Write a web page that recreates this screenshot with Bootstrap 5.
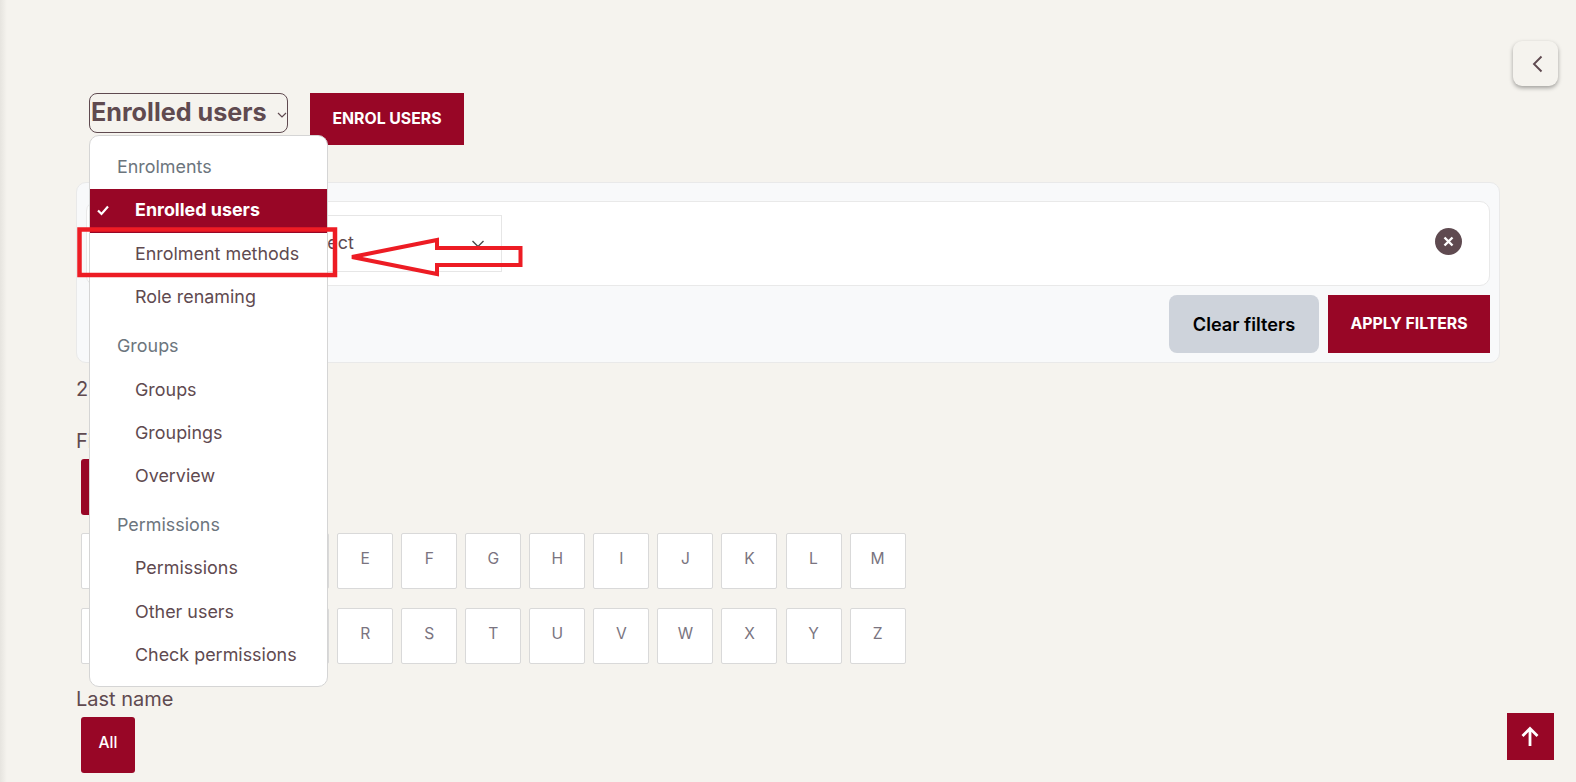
<!DOCTYPE html>
<html lang="en">
<head>
<meta charset="utf-8">
<title>Enrolled users</title>
<link href="https://cdn.jsdelivr.net/npm/bootstrap@5.3.0/dist/css/bootstrap.min.css" rel="stylesheet">
<style>
html,body{height:100%;overflow:hidden}
body{background:#f5f3ee;color:#5f4a50;font-family:Inter,"Liberation Sans",sans-serif;font-size:20px;line-height:1.5}
.edge-shade{position:absolute;left:0;top:0;bottom:0;width:7px;background:linear-gradient(90deg,#e6e4df,#f5f3ee)}
.page-main{position:relative;padding:93px 0 0 76px;box-sizing:content-box;width:1424px}
.head-row{margin-left:13px;height:52px;gap:22px;align-items:flex-start}
.menu-wrap{position:relative}
.title-btn{height:40px;width:199px;background:transparent;border:1px solid #5f4a50;border-radius:8px;color:#5f4a50;font-size:25.2px;font-weight:700;padding:0 1px 2px;line-height:36px;display:flex;align-items:center;justify-content:space-between;white-space:nowrap}
.title-btn svg{margin-right:-2px;margin-top:6px}
.menu-box{display:block;position:absolute;top:42px;left:0;width:239px;height:552px;padding:9px 0 0;margin:0;border:1px solid #d5d5d5;border-radius:10px;background:#fff;font-size:17.92px;z-index:5}
.menu-box .dropdown-header{color:#6c757d;font-size:17.92px;line-height:26px;padding:9px 27px 9px;white-space:nowrap}
.menu-box .dropdown-item{color:#5f4a50;line-height:26px;padding:8.6px 45px;position:relative;font-size:17.92px}
.menu-box .dropdown-item.active{background:#980626;color:#fff;font-weight:700;padding:8px 45px 9.5px}
.menu-box .dropdown-item svg{position:absolute;left:6px;top:14px}
.menu-box .group-gap{margin-top:5.2px}
.primary-btn{background:#980626;border:0;border-radius:0;color:#fff;font-weight:700;font-size:15.8px;text-transform:uppercase}
.primary-btn:hover{background:#980626;color:#fff}
.enrol-btn{width:154px;height:52px}
.filter-panel{margin-top:37px;height:181px;background:#f8f9fa;border:1px solid #e9e9e9;border-radius:10px;padding:18px 9px 0 9px}
.filter-row{height:85px;background:#fff;border:1px solid #e9e9e9;border-radius:10px;padding:13px 27px 0 200px;align-items:flex-start;justify-content:space-between}
.select-box{width:214px;height:57px;border:1px solid #e6e6e6;font-size:17.92px;align-items:center;justify-content:space-between;margin-left:1px;padding:0 16px 0 12px}
.clear-x{width:27px;height:27px;border-radius:50%;background:#5f4a50;border:0;padding:0;margin-top:13px;display:flex;align-items:center;justify-content:center}
.filter-actions{margin-top:9px;gap:9px;justify-content:flex-end}
.clear-btn{width:150px;height:58px;background:#ced3db;border:0;border-radius:8px;color:#000;font-weight:600;font-size:18.2px;padding-top:8px}
.clear-btn:hover{background:#ced3db;color:#000}
.apply-btn{width:162px;height:58px}
.count-line{margin:12px 0 0;line-height:28px}
.name-label{line-height:28px;margin:0;margin-top:24px}
.tile-set{padding-left:5px}
.all-btn{display:flex;align-items:center;justify-content:center;width:54px;height:56px;background:#980626;border-radius:3px;color:#fff;font-size:15.6px;font-weight:500;margin-top:4px;padding-bottom:4px}
.tile-row{display:flex;gap:8.05px;margin-top:18px}
.tile-row + .tile-row{margin-top:19px}
.tile{width:56px;height:56px;background:#fff;border:1px solid #d9d9d9;border-radius:2px;color:#7a7480;font-size:15.6px;display:flex;align-items:center;justify-content:center;padding-bottom:4px}
.last-label{margin-top:21px}
.collapse-btn{position:absolute;left:1513px;top:41px;width:45px;height:45px;background:#f5f3ee;border:0;border-radius:9px;box-shadow:0 2px 4px rgba(0,0,0,.35);display:flex;align-items:center;justify-content:center;padding:0 0 0 2px}
.top-btn{position:absolute;left:1507px;top:713px;width:47px;height:47px;background:#980626;border:0;padding:0 2px 0 0;display:flex;align-items:center;justify-content:center}
.note-mark{position:absolute;left:0;top:0;z-index:10;pointer-events:none}
</style>
</head>
<body>
<div class="edge-shade"></div>
<main class="page-main">
  <div class="d-flex head-row">
    <div class="menu-wrap">
      <button class="title-btn" type="button">Enrolled users
        <svg width="12" height="10" viewBox="0 0 12 10"><path d="M2 3 6 7l4-4" fill="none" stroke="#5f4a50" stroke-width="1.2"/></svg>
      </button>
      <ul class="dropdown-menu menu-box list-unstyled">
        <li class="dropdown-header">Enrolments</li>
        <li><a class="dropdown-item active" href="#"><svg width="14" height="14" viewBox="0 0 14 14"><path d="M2 7.5 5.5 11 12 3.5" fill="none" stroke="#fff" stroke-width="2.2"/></svg>Enrolled users</a></li>
        <li><a class="dropdown-item" href="#">Enrolment methods</a></li>
        <li><a class="dropdown-item" href="#">Role renaming</a></li>
        <li class="dropdown-header group-gap">Groups</li>
        <li><a class="dropdown-item" href="#">Groups</a></li>
        <li><a class="dropdown-item" href="#">Groupings</a></li>
        <li><a class="dropdown-item" href="#">Overview</a></li>
        <li class="dropdown-header group-gap">Permissions</li>
        <li><a class="dropdown-item" href="#">Permissions</a></li>
        <li><a class="dropdown-item" href="#">Other users</a></li>
        <li><a class="dropdown-item" href="#">Check permissions</a></li>
      </ul>
    </div>
    <button class="btn primary-btn enrol-btn" type="button">Enrol users</button>
  </div>

  <section class="filter-panel">
    <div class="d-flex filter-row">
      <div class="d-flex select-box"><span>Select</span>
        <svg width="14" height="14" viewBox="0 0 14 14"><path d="M1.5 4 7 9.5 12.5 4" fill="none" stroke="#4a4a4a" stroke-width="1.4"/></svg>
      </div>
      <button class="clear-x" type="button" aria-label="Remove">
        <svg width="11" height="11" viewBox="0 0 11 11"><path d="M1.5 1.5l8 8M9.5 1.5l-8 8" stroke="#fff" stroke-width="2.4"/></svg>
      </button>
    </div>
    <div class="d-flex filter-actions">
      <button class="btn clear-btn" type="button">Clear filters</button>
      <button class="btn primary-btn apply-btn" type="button">Apply filters</button>
    </div>
  </section>

  <p class="count-line">2 participants found</p>
  <p class="name-label">First name</p>
  <div class="tile-set">
    <div class="all-btn">All</div>
    <div class="tile-row"><div class="tile">A</div><div class="tile">B</div><div class="tile">C</div><div class="tile">D</div><div class="tile">E</div><div class="tile">F</div><div class="tile">G</div><div class="tile">H</div><div class="tile">I</div><div class="tile">J</div><div class="tile">K</div><div class="tile">L</div><div class="tile">M</div></div>
    <div class="tile-row"><div class="tile">N</div><div class="tile">O</div><div class="tile">P</div><div class="tile">Q</div><div class="tile">R</div><div class="tile">S</div><div class="tile">T</div><div class="tile">U</div><div class="tile">V</div><div class="tile">W</div><div class="tile">X</div><div class="tile">Y</div><div class="tile">Z</div></div>
  </div>
  <p class="name-label last-label">Last name</p>
  <div class="tile-set"><div class="all-btn">All</div></div>
</main>

<button class="collapse-btn" type="button" aria-label="Open block drawer">
  <svg width="14" height="20" viewBox="0 0 14 20"><path d="M11.5 2.5 4 10l7.500 7.500" fill="none" stroke="#5f4a50" stroke-width="1.9"/></svg>
</button>
<button class="top-btn" type="button" aria-label="Back to top">
  <svg width="20" height="22" viewBox="0 0 20 22"><path d="M10 20V3M2.500 10 10 2.500 17.500 10" fill="none" stroke="#fff" stroke-width="2.8"/></svg>
</button>
<svg class="note-mark" width="1576" height="782" viewBox="0 0 1576 782">
  <rect x="79.500" y="229.500" width="255.500" height="45.500" fill="none" stroke="#ed1c24" stroke-width="4.500"/>
  <path d="M352 257 437 240V248H520.500V265H437V274Z" fill="none" stroke="#ed1c24" stroke-width="4"/>
</svg>
<script src="https://cdn.jsdelivr.net/npm/bootstrap@5.3.0/dist/js/bootstrap.bundle.min.js"></script>
</body>
</html>
